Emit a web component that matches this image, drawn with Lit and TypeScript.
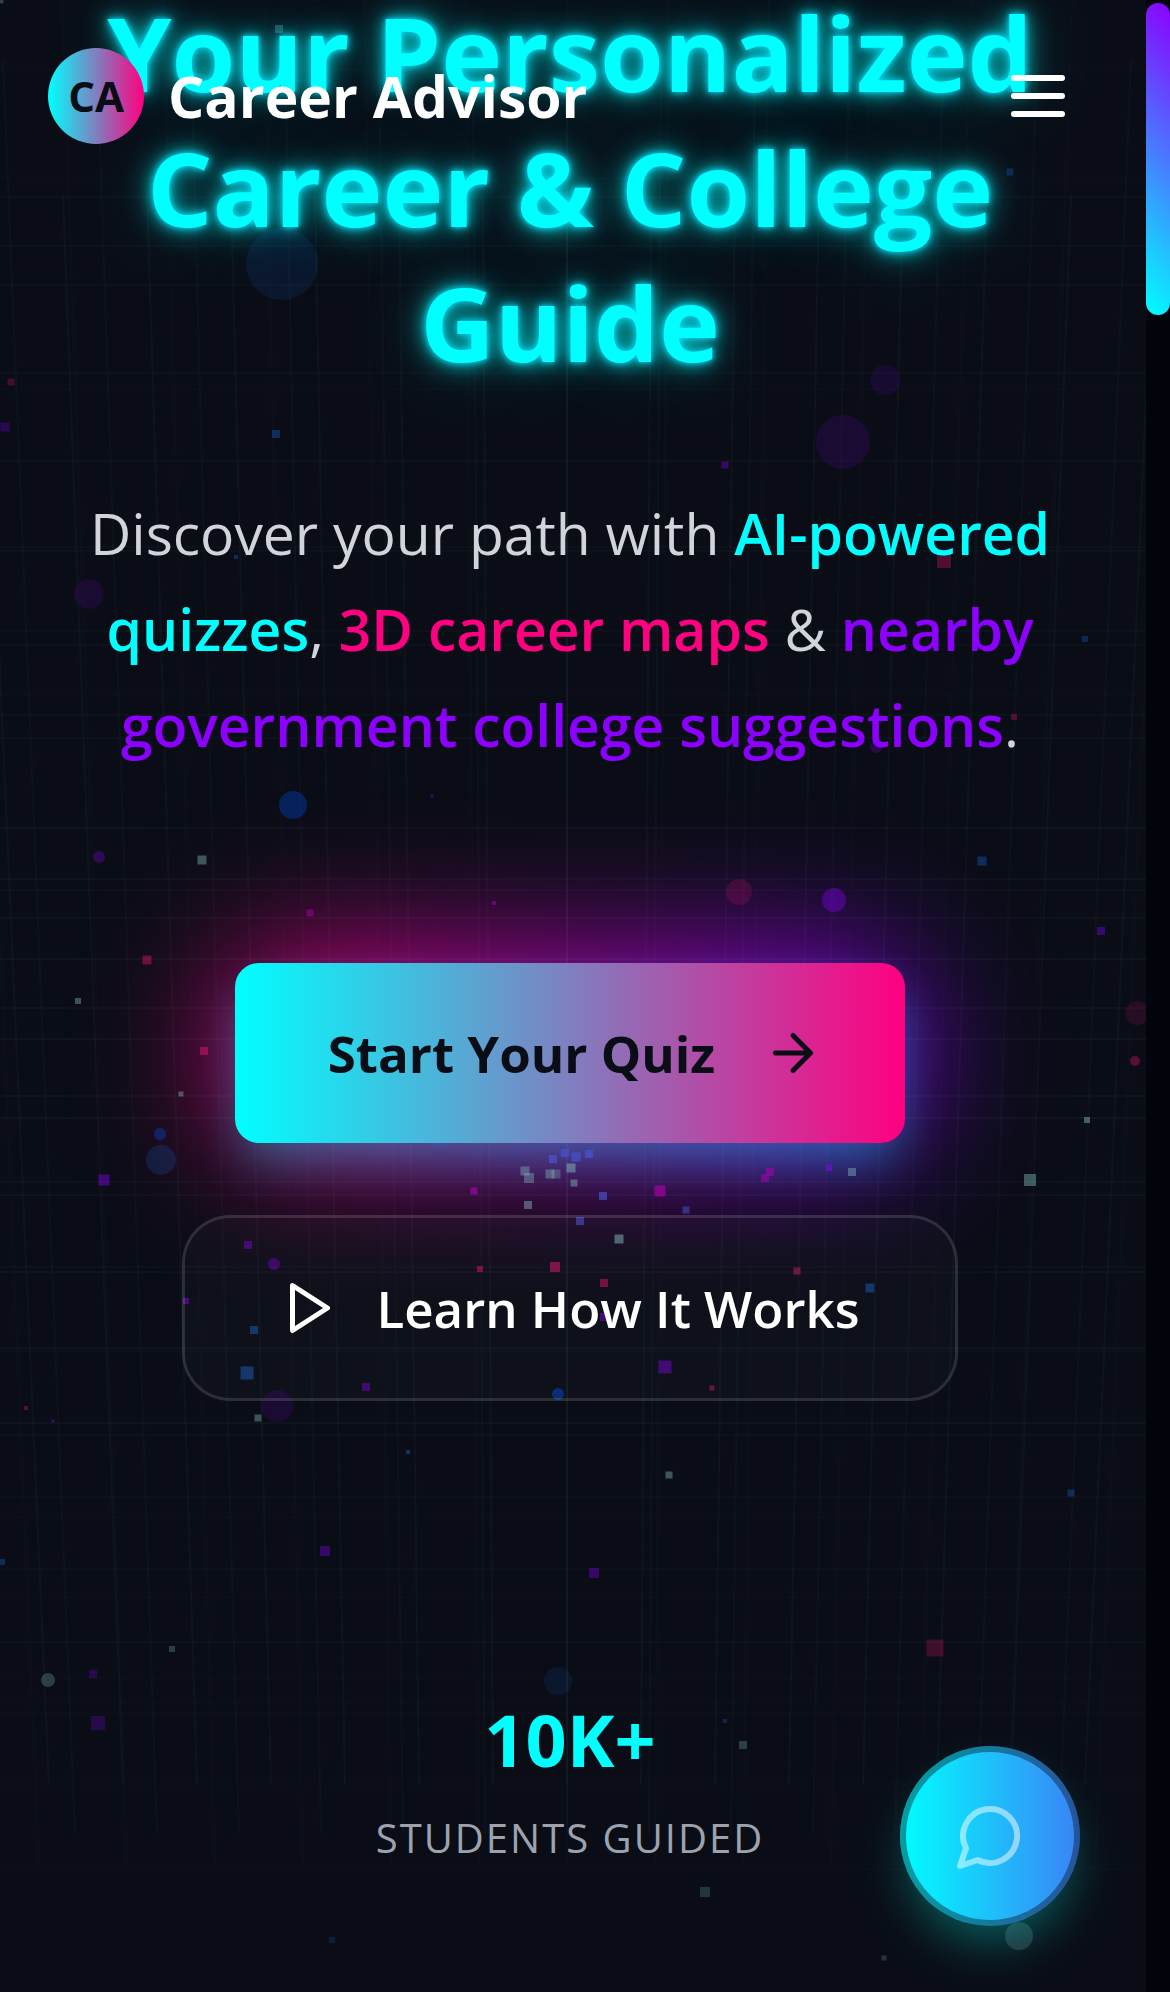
import { LitElement, html, svg, css } from "lit";
import { customElement } from "lit/decorators.js";

type Tone = "violet" | "pink" | "blue" | "navy" | "mist" | "magenta" | "indigo";

/* Square sparks: centre x, centre y, side, tone, opacity */
const SPARKS: [number, number, number, Tone, number][] = [
  [1, 1, 5, "mist", 0.3], [279, 29, 8, "mist", 0.3], [11, 382, 7, "pink", 0.24],
  [1010, 172, 7, "blue", 0.24], [5, 427, 9, "violet", 0.26], [276, 434, 8, "blue", 0.3],
  [236, 557, 4, "blue", 0.3], [725, 465, 7, "violet", 0.34], [944, 561, 14, "pink", 0.28],
  [1085, 639, 6, "blue", 0.26], [1014, 717, 6, "pink", 0.28], [975, 609, 5, "pink", 0.28],
  [432, 796, 3, "violet", 0.4], [202, 860, 9, "mist", 0.42], [310, 913, 7, "magenta", 0.45],
  [494, 903, 4, "magenta", 0.45], [147, 960, 9, "pink", 0.38], [78, 1001, 6, "mist", 0.4],
  [204, 1051, 8, "pink", 0.42], [181, 1094, 5, "mist", 0.42], [104, 1180, 11, "violet", 0.42],
  [525, 1171, 9, "mist", 0.4], [529, 1178, 10, "mist", 0.38], [550, 1174, 9, "mist", 0.4],
  [556, 1174, 9, "mist", 0.3], [553, 1159, 8, "indigo", 0.8], [565, 1153, 8, "indigo", 0.8],
  [576, 1157, 9, "indigo", 0.8], [589, 1154, 8, "indigo", 0.8], [571, 1168, 9, "mist", 0.5],
  [574, 1183, 7, "mist", 0.45], [474, 1191, 7, "magenta", 0.6], [982, 861, 9, "blue", 0.3],
  [1101, 931, 8, "violet", 0.36], [1087, 1120, 6, "mist", 0.46], [1030, 1180, 12, "mist", 0.44],
  [829, 1168, 6, "violet", 0.5], [852, 1172, 8, "mist", 0.42], [770, 1172, 8, "magenta", 0.5],
  [765, 1178, 8, "magenta", 0.5], [660, 1191, 11, "magenta", 0.6], [603, 1196, 8, "indigo", 0.7],
  [528, 1205, 8, "mist", 0.45], [580, 1221, 8, "indigo", 0.6], [248, 1245, 8, "violet", 0.38],
  [480, 1269, 6, "pink", 0.42], [555, 1267, 10, "pink", 0.45], [186, 1301, 6, "violet", 0.45],
  [254, 1330, 8, "blue", 0.36], [247, 1373, 13, "blue", 0.36], [366, 1387, 8, "violet", 0.38],
  [258, 1418, 7, "mist", 0.4], [26, 1408, 4, "pink", 0.32], [53, 1421, 3, "violet", 0.4],
  [408, 1452, 4, "blue", 0.36], [325, 1551, 10, "violet", 0.34], [594, 1573, 10, "violet", 0.34],
  [2, 1562, 6, "blue", 0.28], [686, 1210, 7, "indigo", 0.55], [619, 1239, 9, "mist", 0.5],
  [797, 1271, 7, "pink", 0.4], [604, 1283, 8, "pink", 0.42], [870, 1288, 9, "blue", 0.36],
  [604, 1317, 8, "violet", 0.4], [665, 1367, 13, "violet", 0.4], [712, 1388, 5, "pink", 0.38],
  [669, 1475, 7, "mist", 0.42], [1071, 1493, 7, "blue", 0.28], [172, 1649, 6, "mist", 0.28],
  [93, 1674, 8, "violet", 0.24], [98, 1723, 14, "violet", 0.22], [332, 1940, 6, "blue", 0.16],
  [935, 1648, 17, "pink", 0.22], [725, 1721, 4, "blue", 0.24], [743, 1745, 8, "mist", 0.28],
  [705, 1892, 10, "mist", 0.22], [884, 1958, 5, "mist", 0.22],
];

/* Round orbs: centre x, centre y, radius, tone, opacity */
const ORBS: [number, number, number, Tone, number][] = [
  [282, 264, 36, "blue", 0.1], [885, 380, 15, "violet", 0.11], [89, 594, 15, "violet", 0.12],
  [843, 442, 27, "violet", 0.12], [876, 747, 6, "violet", 0.22], [293, 805, 14, "navy", 0.3],
  [99, 857, 6, "violet", 0.28], [160, 1134, 6, "navy", 0.32], [161, 1160, 15, "blue", 0.16],
  [440, 1138, 10, "blue", 0.1], [739, 892, 13, "pink", 0.16], [834, 900, 12, "violet", 0.36],
  [1137, 1013, 12, "pink", 0.12], [1135, 1061, 5, "pink", 0.32], [274, 1264, 6, "violet", 0.34],
  [558, 1394, 6, "navy", 0.42], [277, 1406, 16, "violet", 0.12], [48, 1680, 7, "mist", 0.28],
  [558, 1681, 14, "blue", 0.1], [1019, 1936, 14, "mist", 0.2],
];

/* Horizontal grid lines: y, opacity */
const ROWS: [number, number][] = [
  [70, 0.01], [178, 0.01], [197, 0.02], [246, 0.02], [285, 0.02], [373, 0.02], [389, 0.01],
  [461, 0.02], [547, 0.02], [551, 0.02], [631, 0.02], [645, 0.02], [694, 0.01], [715, 0.02],
  [738, 0.02], [828, 0.03], [879, 0.03], [890, 0.02], [918, 0.03], [959, 0.04], [1008, 0.03],
  [1039, 0.04], [1096, 0.03], [1118, 0.04], [1182, 0.03], [1195, 0.03], [1267, 0.02],
  [1272, 0.03], [1348, 0.03], [1351, 0.02], [1423, 0.03], [1435, 0.02], [1497, 0.02],
  [1517, 0.01], [1569, 0.02], [1597, 0.01], [1642, 0.02], [1678, 0.01], [1702, 0.01],
  [1713, 0.01], [1784, 0.01], [1869, 0.01],
];

/* Three receding planes of vertical lines: count, top y, top spacing, bottom y, bottom spacing */
const PLANES: [number, number, number, number, number, number][] = [
  [7, 195, 84, 1784, 74, 0.03],
  [6, 60, 94, 1834, 82, 0.024],
  [6, 0, 101, 1869, 88, 0.012],
];
const VANISH = 567;

@customElement("cosmic-backdrop")
export class CosmicBackdrop extends LitElement {
  static styles = css`
    :host { display: block; overflow: hidden; }
    .sky { display: block; width: 100%; height: 100%; }
    .line { stroke: #8cc8d8; stroke-width: 2; }
    .violet { fill: #8b00ff; }
    .pink { fill: #ff1478; }
    .blue { fill: #1e78ff; }
    .navy { fill: #0050ff; }
    .mist { fill: #82bebe; }
    .magenta { fill: #b400b4; }
    .indigo { fill: #4650c8; }
  `;

  render() {
    return html`<svg class="sky" viewBox="0 0 1146 1992" preserveAspectRatio="xMidYMin slice" aria-hidden="true">
      ${ROWS.map(([y, o]) => svg`<line class="line" x1="-400" x2="1600" y1=${y} y2=${y} opacity=${o} />`)}
      ${PLANES.map(([n, y1, s1, y2, s2, o]) =>
        Array.from({ length: n * 2 + 1 }, (_, i) => i - n).map(
          (k) => svg`<line class="line" x1=${VANISH + k * s1} y1=${y1} x2=${VANISH + k * s2} y2=${y2} opacity=${o} />`
        )
      )}
      ${ORBS.map(([x, y, r, tone, o]) => svg`<circle class=${tone} cx=${x} cy=${y} r=${r} opacity=${o} />`)}
      ${SPARKS.map(([x, y, s, tone, o]) => svg`<rect class=${tone} x=${x - s / 2} y=${y - s / 2} width=${s} height=${s} opacity=${o} />`)}
    </svg>`;
  }
}

@customElement("app-root")
export class AppRoot extends LitElement {
  static styles = css`
    :host {
      display: grid;
      grid-template-columns: minmax(0, 1fr) 24px;
      min-height: 100vh;
      overflow: hidden;
      background: #0a0d16;
      color: #fff;
      font-family: "Open Sans", "Noto Sans", sans-serif;
    }
    .page {
      position: relative;
      isolation: isolate;
      overflow: hidden;
    }
    .backdrop {
      position: absolute;
      inset: 0;
      z-index: -1;
      pointer-events: none;
    }
    .bar {
      position: absolute;
      inset: 0 0 auto;
      z-index: 2;
      box-sizing: border-box;
      display: flex;
      align-items: center;
      justify-content: space-between;
      padding: 36px 48px;
    }
    .brand {
      display: flex;
      align-items: center;
      gap: 24px;
      color: inherit;
      text-decoration: none;
      font-size: 57px;
      line-height: 84px;
      font-weight: 700;
    }
    .badge {
      display: grid;
      place-items: center;
      width: 96px;
      height: 96px;
      border-radius: 50%;
      background: linear-gradient(90deg, #0ff, #ff0080);
      color: #0a0d15;
      font-size: 42px;
      line-height: 60px;
    }
    button {
      font: inherit;
      color: inherit;
      background: none;
      border: 0;
      cursor: pointer;
    }
    .menu { display: flex; padding: 24px; }
    .icon {
      display: block;
      fill: none;
      stroke: currentColor;
      stroke-width: 2;
      stroke-linecap: round;
      stroke-linejoin: round;
    }
    .lg { width: 72px; height: 72px; }
    .md { width: 60px; height: 60px; }
    .hero {
      display: flex;
      flex-direction: column;
      align-items: center;
      padding: 0 54px 0 48px;
      text-align: center;
    }
    .title {
      margin: -15px 0 95px;
      color: #0ff;
      font-size: 103px;
      line-height: 135px;
      font-weight: 700;
      text-shadow:
        0 0 6px #00d8ff,
        0 0 15px rgba(0, 255, 255, 0.7),
        0 0 30px rgba(0, 255, 255, 0.6),
        0 0 72px rgba(0, 255, 255, 0.3);
    }
    .lead {
      margin: 0 0 190px;
      color: #d1d5db;
      font-size: 57px;
      line-height: 96px;
    }
    .lead strong { font-weight: 600; }
    .cyan { color: #0ff; }
    .rose { color: #ff0080; }
    .purple { color: #8b00ff; }
    .actions {
      display: flex;
      flex-direction: column;
      align-items: center;
      gap: 72px;
    }
    .cta {
      position: relative;
      display: flex;
      align-items: center;
      height: 180px;
      font-size: 51px;
      white-space: nowrap;
    }
    .start {
      gap: 48px;
      padding: 0 82px 0 93px;
      border-radius: 24px;
      background: linear-gradient(90deg, #0ff, #ff0080);
      color: #0a0d15;
      font-weight: 700;
    }
    .start::before,
    .start::after {
      content: "";
      position: absolute;
      inset: 0;
      z-index: -2;
      border-radius: 24px;
    }
    .start::before {
      background: linear-gradient(90deg, #ff0080, #8b00ff);
      filter: blur(72px);
    }
    .start::after { box-shadow: 0 24px 48px -6px rgba(0, 220, 255, 0.4); }
    .learn {
      gap: 36px;
      height: 186px;
      padding: 0 95px;
      border: 3px solid rgba(255, 255, 255, 0.12);
      border-radius: 48px;
      background: rgba(255, 255, 255, 0.02);
      font-weight: 600;
    }
    .stats {
      display: grid;
      gap: 21px;
      margin: 290px 0 0;
    }
    .figure {
      grid-row: 1;
      margin: 0;
      color: #0ff;
      font-size: 72px;
      line-height: 96px;
      font-weight: 700;
    }
    .label {
      color: #9ca3af;
      font-size: 40px;
      line-height: 60px;
      letter-spacing: 2px;
      text-transform: uppercase;
    }
    .chat {
      position: absolute;
      right: 66px;
      bottom: 66px;
      z-index: 2;
      display: grid;
      place-items: center;
      width: 180px;
      height: 180px;
      padding: 0;
      border-radius: 50%;
      background: linear-gradient(90deg, #0ff, #3b82f6);
      box-shadow: 0 24px 48px -9px rgba(0, 255, 240, 0.34);
      color: rgba(255, 255, 255, 0.5);
    }
    .chat::before {
      content: "";
      position: absolute;
      inset: 0;
      border: 6px solid rgba(10, 13, 21, 0.4);
      border-radius: 50%;
    }
    .track {
      padding: 3px 0;
      background: #02040c;
    }
    .thumb {
      height: 312px;
      border-radius: 12px;
      background: linear-gradient(45deg, #0ff, #8b00ff);
    }
  `;

  render() {
    return html`
      <div class="page">
        <cosmic-backdrop class="backdrop"></cosmic-backdrop>
        <header class="bar">
          <a class="brand" href="#"><span class="badge">CA</span><span>Career Advisor</span></a>
          <button class="menu" type="button" aria-label="Menu">
            <svg class="icon lg" viewBox="0 0 24 24"><path d="M4 6h16M4 12h16M4 18h16" /></svg>
          </button>
        </header>
        <main class="hero">
          <h1 class="title">Your Personalized Career &amp; College Guide</h1>
          <p class="lead">
            Discover your path with <strong class="cyan">AI-powered quizzes</strong>,
            <strong class="rose">3D career maps</strong> &amp;
            <strong class="purple">nearby government college suggestions</strong>.
          </p>
          <div class="actions">
            <button class="cta start" type="button">
              Start Your Quiz
              <svg class="icon md" viewBox="0 0 24 24"><path d="M5 12h14M12 5l7 7-7 7" /></svg>
            </button>
            <button class="cta learn" type="button">
              <svg class="icon md" viewBox="0 0 24 24"><path d="M5 3l14 9-14 9z" /></svg>
              Learn How It Works
            </button>
          </div>
          <dl class="stats">
            <dt class="label">Students Guided</dt>
            <dd class="figure">10K+</dd>
          </dl>
        </main>
        <button class="chat" type="button" aria-label="Open chat">
          <svg class="icon lg" viewBox="0 0 24 24"><path d="M7.9 20A9 9 0 1 0 4 16.1L2 22Z" /></svg>
        </button>
      </div>
      <div class="track"><div class="thumb"></div></div>
    `;
  }
}
